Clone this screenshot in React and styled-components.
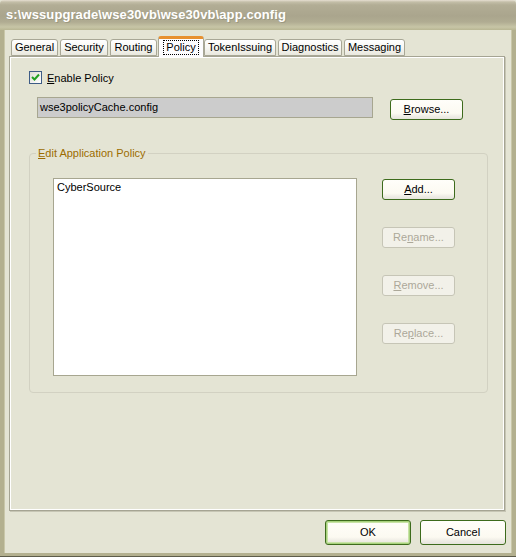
import React from "react";
import styled, { createGlobalStyle } from "styled-components";

const Global = createGlobalStyle`
  html, body { margin: 0; padding: 0; background: #e4e4d4; }
  body { font-family: "Liberation Sans", Arial, sans-serif; font-size: 11px; color: #000; }
  * { box-sizing: border-box; }
`;

const Window = styled.div`
  width: 516px;
  height: 557px;
  display: flex;
  flex-direction: column;
  background: #e4e4d4;
  border-bottom: 1px solid #5d5c4a;
`;

const TitleBar = styled.div`
  height: 30px;
  flex: none;
  display: flex;
  align-items: center;
  padding: 0 0 2px 6px;
  background: linear-gradient(
    to bottom,
    #e6dfd2 0px,
    #c3bea8 2px,
    #b2ad95 5px,
    #aaa58d 16px,
    #b0ac92 22px,
    #c7c5a6 27px,
    #b8b693 30px
  );
  border-radius: 4px 4px 0 0;
`;

const TitleText = styled.span`
  font-family: "Liberation Sans", Arial, sans-serif;
  font-weight: bold;
  font-size: 13px;
  color: #ffffff;
  text-shadow: 1px 1px 0 #9c9880;
  letter-spacing: 0.1px;
`;

const Frame = styled.div`
  flex: 1;
  display: flex;
  flex-direction: column;
  border-left: 4px solid #b3b08f;
  border-right: 4px solid #b3b08f;
  border-bottom: 3px solid #b3b08f;
  padding: 6px 7px 0 5px;
  box-shadow: inset 1px 0 0 #c9c7a9, inset -1px 0 0 #c9c7a9;
`;

const TabStrip = styled.div`
  height: 20px;
  flex: none;
  display: flex;
  align-items: flex-end;
  padding-left: 2px;
  position: relative;
  z-index: 1;
`;

const Tab = styled.div`
  width: ${(p) => p.$w}px;
  height: ${(p) => (p.$active ? 21 : 17)}px;
  margin-right: ${(p) => (p.$active ? 0 : 2)}px;
  margin-left: ${(p) => (p.$active ? -1 : 0)}px;
  margin-bottom: ${(p) => (p.$active ? -1 : 0)}px;
  display: flex;
  align-items: center;
  justify-content: center;
  border: 1px solid #a8a796;
  border-bottom: ${(p) => (p.$active ? "none" : "1px solid #a8a796")};
  border-top: ${(p) => (p.$active ? "3px solid #e7902f" : "1px solid #a8a796")};
  border-radius: 3px 3px 0 0;
  background: ${(p) =>
    p.$active
      ? "#fcfcfe"
      : "linear-gradient(to bottom, #ffffff 0%, #f7f7f3 50%, #e9e8de 100%)"};
  padding-bottom: ${(p) => (p.$active ? 2 : 1)}px;
  white-space: nowrap;
`;

const TabLabel = styled.span`
  padding: 0 2px;
  line-height: 13px;
  border: 1px dotted ${(p) => (p.$focus ? "#000" : "transparent")};
`;

const Panel = styled.div`
  flex: 1;
  display: flex;
  flex-direction: column;
  border: 1px solid #a5a493;
  box-shadow: inset 1px 1px 0 #ffffff, inset -1px -1px 0 #ffffff, 1px 1px 0 #c6c5b4;
  padding: 14px 0 0 19px;
`;

const CheckRow = styled.label`
  display: flex;
  align-items: center;
  height: 13px;
  gap: 5px;
  margin-bottom: 13px;
`;

const CheckBox = styled.span`
  width: 13px;
  height: 13px;
  flex: none;
  border: 1px solid #3e5c86;
  background: linear-gradient(135deg, #dcdcd4 0%, #f6f6f3 70%, #ffffff 100%);
  display: flex;
  align-items: center;
  justify-content: center;
`;

const PathRow = styled.div`
  display: flex;
  align-items: flex-start;
  height: 23px;
`;

const PathBox = styled.div`
  width: 336px;
  height: 21px;
  margin-left: 8px;
  border: 1px solid #a7a690;
  background: #cccccc;
  display: flex;
  align-items: center;
  padding-left: 2px;
  padding-bottom: 1px;
`;

const Button = styled.div`
  width: ${(p) => p.$w || 73}px;
  height: ${(p) => p.$h || 21}px;
  display: flex;
  align-items: center;
  justify-content: center;
  border-radius: 3px;
  border: 1px solid ${(p) => (p.$disabled ? "#c6c5b6" : "#3d6b1c")};
  color: ${(p) => (p.$disabled ? "#aca899" : "#000")};
  background: ${(p) =>
    p.$disabled
      ? "#f2f1e9"
      : "linear-gradient(to bottom, #fffefa 0%, #fcfaf1 70%, #efede5 85%, #e6e4dc 100%)"};
  box-shadow: ${(p) =>
    p.$default ? "inset 0 0 0 1px #a7d17c, inset 0 0 0 2px #c8e3a6" : "none"};
  margin-top: ${(p) => p.$mt || 0}px;
  margin-left: ${(p) => p.$ml || 0}px;
  padding-bottom: 1px;
`;

const GroupBox = styled.div`
  position: relative;
  width: 459px;
  height: 240px;
  margin-top: 33px;
  border: 1px solid #d2d1c2;
  border-radius: 4px;
  display: flex;
  align-items: flex-start;
  padding: 24px 0 0 23px;
`;

const GroupLegend = styled.span`
  position: absolute;
  top: -7px;
  left: 6px;
  padding: 0 2px 0 2px;
  line-height: 13px;
  background: #e4e4d4;
  color: #9c6c00;
`;

const ListBox = styled.div`
  width: 304px;
  height: 198px;
  background: #ffffff;
  border: 1px solid #a7a690;
  padding: 2px 0 0 3px;
  line-height: 13px;
`;

const ButtonColumn = styled.div`
  display: flex;
  flex-direction: column;
  margin-left: 25px;
  margin-top: 1px;
  gap: 27px;
`;

const Footer = styled.div`
  height: 42px;
  flex: none;
  display: flex;
  justify-content: flex-end;
  align-items: flex-start;
  padding-top: 9px;
  margin-right: -1px;
  gap: 9px;
`;

const tabs = [
  { name: "General", w: 47 },
  { name: "Security", w: 48 },
  { name: "Routing", w: 47 },
  { name: "Policy", w: 46, active: true },
  { name: "TokenIssuing", w: 72 },
  { name: "Diagnostics", w: 64 },
  { name: "Messaging", w: 61 },
];

export default function App() {
  return (
    <>
      <Global />
      <Window>
        <TitleBar>
          <TitleText>s:\wssupgrade\wse30vb\wse30vb\app.config</TitleText>
        </TitleBar>
        <Frame>
          <TabStrip>
            {tabs.map((t) => (
              <Tab key={t.name} $w={t.w} $active={t.active}>
                <TabLabel $focus={t.active}>{t.name}</TabLabel>
              </Tab>
            ))}
          </TabStrip>
          <Panel>
            <CheckRow>
              <CheckBox>
                <svg width="9" height="9" viewBox="0 0 9 9">
                  <path
                    d="M1 4 L3.5 6.5 L8 1.5"
                    fill="none"
                    stroke="#21a121"
                    strokeWidth="2"
                  />
                </svg>
              </CheckBox>
              <span>
                <u>E</u>nable Policy
              </span>
            </CheckRow>
            <PathRow>
              <PathBox>wse3policyCache.config</PathBox>
              <Button $mt={2} $ml={17}>
                <span>
                  <u>B</u>rowse...
                </span>
              </Button>
            </PathRow>
            <GroupBox>
              <GroupLegend>
                <u>E</u>dit Application Policy
              </GroupLegend>
              <ListBox>CyberSource</ListBox>
              <ButtonColumn>
                <Button>
                  <span>
                    <u>A</u>dd...
                  </span>
                </Button>
                <Button $disabled>
                  <span>
                    Re<u>n</u>ame...
                  </span>
                </Button>
                <Button $disabled>
                  <span>
                    <u>R</u>emove...
                  </span>
                </Button>
                <Button $disabled>
                  <span>
                    Re<u>p</u>lace...
                  </span>
                </Button>
              </ButtonColumn>
            </GroupBox>
          </Panel>
          <Footer>
            <Button $w={86} $h={25} $default>
              OK
            </Button>
            <Button $w={86} $h={25}>
              Cancel
            </Button>
          </Footer>
        </Frame>
      </Window>
    </>
  );
}
